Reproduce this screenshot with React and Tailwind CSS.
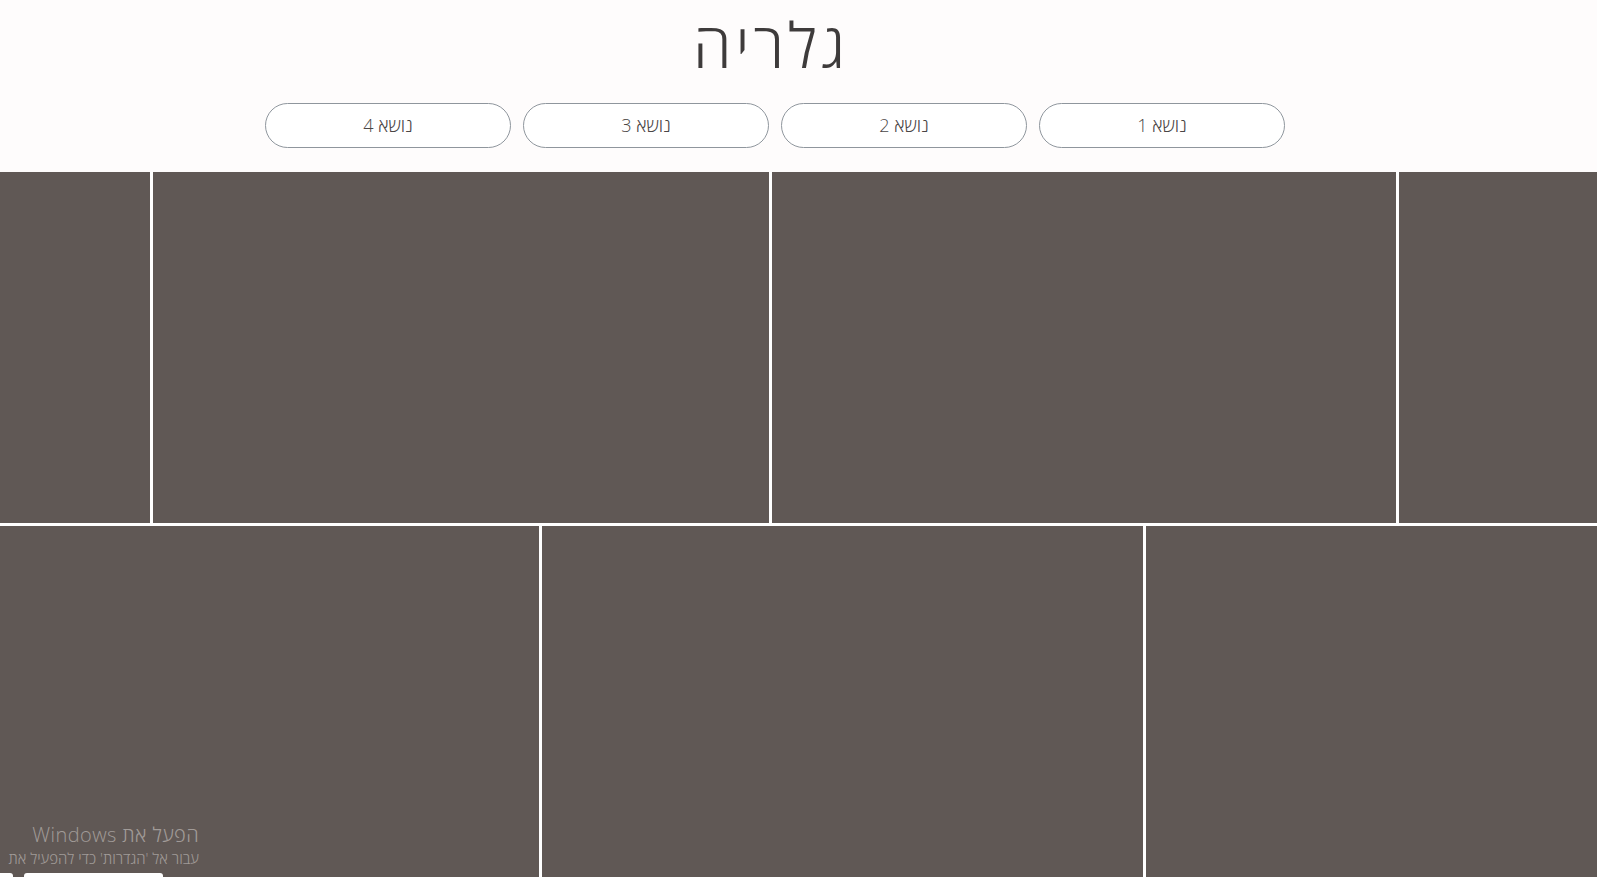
import React from 'react';

const topics = ['נושא 1', 'נושא 2', 'נושא 3', 'נושא 4'];

const Tile = ({ className = '' }) => <div className={`h-full bg-[#605855] ${className}`} />;

export default function App() {
  return (
    <div className="relative w-[1597px] h-[877px] overflow-hidden bg-white" style={{ fontFamily: '"Open Sans", "Noto Sans", "DejaVu Sans", sans-serif' }}>
      <header className="bg-[#fefcfc] h-[172px] pt-[4px]">
        <h1 dir="rtl" className="ml-[671px] w-[200px] text-center text-[62px] leading-[80px] tracking-[4px] font-light text-[#3e3b3b]">
          גלריה
        </h1>
        <nav dir="rtl" className="flex gap-[12px] mr-[312px] mt-[19px]">
          {topics.map((t) => (
            <button
              key={t}
              className="w-[246px] h-[45px] rounded-full border border-[#8f969d] bg-white text-[18px] font-light text-[#4a4646]"
            >
              {t}
            </button>
          ))}
        </nav>
      </header>

      <section className="flex flex-col gap-[3px] bg-white">
        <div className="flex gap-[3px] h-[351px]">
          <Tile className="w-[150px] shrink-0" />
          <Tile className="w-[616px] shrink-0" />
          <Tile className="w-[624px] shrink-0" />
          <Tile className="flex-1" />
        </div>
        <div className="flex gap-[3px] h-[351px]">
          <Tile className="w-[539px] shrink-0" />
          <Tile className="w-[601px] shrink-0" />
          <Tile className="flex-1" />
        </div>
      </section>

      {/* windows activation watermark */}
      <div dir="rtl" className="absolute left-0 top-[822px] w-[199px] overflow-hidden whitespace-nowrap text-[#a19b98]">
        <div className="text-[20px] leading-[26px] font-light tracking-[0.4px]">הפעל את Windows</div>
        <div className="text-[15px] leading-[20px] font-light">עבור אל 'הגדרות' כדי להפעיל את</div>
      </div>
      <div className="absolute left-0 top-[873px] w-[13px] h-[8px] bg-white rounded-tr-[3px]" />
      <div className="absolute left-[24px] top-[873px] w-[139px] h-[8px] bg-white rounded-t-[3px]" />
    </div>
  );
}
